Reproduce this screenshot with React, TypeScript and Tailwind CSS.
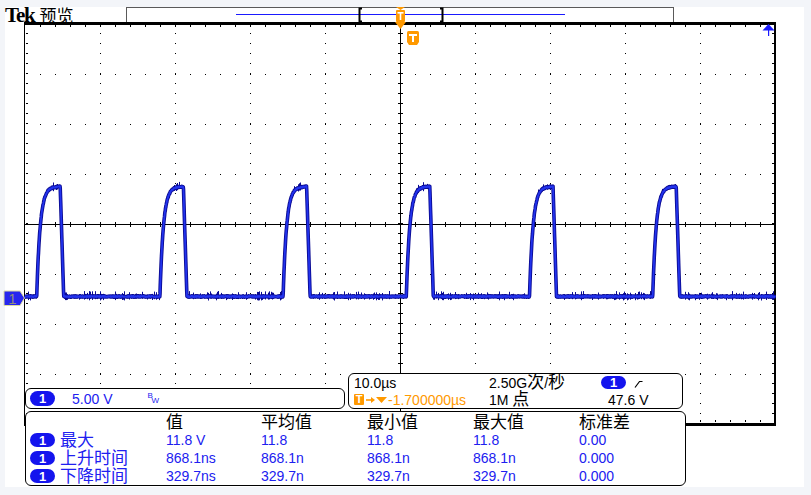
import React from "react";

const BASE = 296.5;
const TOP = 186.5;
const PERIOD = 123.2;
const FIRST = 36.7;

function rng(seed: number) {
  let a = seed;
  return () => {
    a = (a + 0x6d2b79f5) | 0;
    let t = Math.imul(a ^ (a >>> 15), 1 | a);
    t = (t + Math.imul(t ^ (t >>> 7), 61 | t)) ^ t;
    return ((t ^ (t >>> 14)) >>> 0) / 4294967296;
  };
}

function level(x: number) {
  const k = Math.floor((x - FIRST) / PERIOD);
  if (k < 0) return BASE;
  const t = x - (FIRST + k * PERIOD);
  if (t < 23.5) return BASE - (BASE - TOP) * (1 - Math.exp(-t / 3.5));
  if (t < 27) return TOP + (BASE - TOP) * ((t - 23.5) / 3.5);
  return BASE;
}

function Waveform() {
  const r = rng(7);
  const pts: string[] = [];
  for (let x = 25; x <= 775; x += 0.25) {
    const y = level(x) + (r() - 0.5) * 1.2;
    pts.push(`${x.toFixed(2)},${y.toFixed(2)}`);
  }
  let spikes = "";
  for (let x = 25; x < 775; x++) {
    const y = level(x + 0.5);
    if (r() < 0.3) {
      const up = 2 + r() * 3.5;
      const dn = 2 + r() * 2;
      spikes += `M${x + 0.5} ${(y - up).toFixed(1)}V${(y + dn).toFixed(1)}`;
    }
  }
  return (
    <g>
      <polyline points={pts.join(" ")} fill="none" stroke="#0a0a92" strokeWidth={3.6} strokeLinejoin="round" />
      <path d={spikes} stroke="#0a0a92" strokeWidth={1} />
      <polyline points={pts.join(" ")} fill="none" stroke="#2233ee" strokeWidth={1.8} strokeLinejoin="round" />
    </g>
  );
}

function Graticule() {
  let d = "";
  const dot = (x: number, y: number, w = 1, h = 1) => {
    d += `M${x} ${y}h${w}v${h}h${-w}z`;
  };
  for (let k = 1; k < 10; k++) {
    if (k === 5) continue;
    const x = 25 + 75 * k;
    for (let y = 33; y < 423; y += 10) dot(x, y);
  }
  for (let k = 1; k < 8; k++) {
    if (k === 4) continue;
    const y = 24 + 50 * k;
    for (let x = 40; x < 775; x += 15) dot(x, y);
  }
  for (let x = 40; x < 775; x += 15) {
    dot(x, 25, 1, 2);
    dot(x, 420, 1, 2);
    dot(x, 222, 1, 5);
  }
  for (let y = 33; y < 423; y += 10) {
    dot(26, y, 2, 1);
    dot(772, y, 2, 1);
    dot(398, y, 5, 1);
  }
  return (
    <svg className="block ml-[18px]" width={753} height={404} viewBox="23 22 753 404" shapeRendering="crispEdges">
      <path d={d} fill="#000" />
      <rect x={400} y={22} width={1} height={402} fill="#000" />
      <rect x={24} y={224} width={751} height={1} fill="#000" />
      <rect x={24} y={22} width={752} height={3} fill="#000" />
      <rect x={24} y={22} width={1} height={404} fill="#000" />
      <rect x={774} y={22} width={2} height={404} fill="#000" />
      <rect x={24} y={423} width={752} height={3} fill="#000" />
      <g shapeRendering="auto">
        <Waveform />
      </g>
    </svg>
  );
}

function Overlay() {
  return (
    <svg className="absolute left-0 top-0 pointer-events-none" width={811} height={495} viewBox="0 0 811 495">
      <rect x={236} y={14} width={329} height={1} fill="#1a1aff" />
      <path d="M362 8.5H359.5V21.5H362" fill="none" stroke="#000" strokeWidth={2} />
      <path d="M440 8.5H442.5V21.5H440" fill="none" stroke="#000" strokeWidth={2} />
      <path d="M396 7H405L400.5 10Z" fill="#ff9900" />
      <rect x={396} y={10} width={9} height={12} rx={1} fill="#ff9900" />
      <rect x={397.5} y={12} width={6} height={1.6} fill="#fff" />
      <rect x={399.7} y={12} width={1.6} height={8} fill="#fff" />
      <path d="M395 22H406L400.5 29Z" fill="#ff9900" />
      <path d="M407 32.5Q407 31 408.5 31H417.5Q419 31 419 32.5V42L417 45H409L407 42Z" fill="#ff9900" />
      <rect x={409} y={34} width={8} height={2} fill="#fff" />
      <rect x={412} y={34} width={2} height={8} fill="#fff" />
      <path d="M762.5 30.5H774.5L768.5 24Z" fill="#1a1aff" />
      <rect x={768} y={30} width={1.2} height={6} fill="#1a1aff" />
      <path d="M4 291H20L24.5 298L20 305.5H4Z" fill="#2626ee" stroke="#deddA0" strokeWidth={1} />
      <text x={12.5} y={303.5} textAnchor="middle" fontSize={15} fill="#8f8f7c" fontFamily="Liberation Sans, sans-serif">
        1
      </text>
    </svg>
  );
}

const Pill = ({ h = "h-[14px]" }: { h?: string }) => (
  <span
    className={`inline-flex w-[25px] ${h} rounded-full bg-[#1414ee] text-white text-[13px] font-bold leading-none items-center justify-center`}
  >
    1
  </span>
);

const header = ["值", "平均值", "最小值", "最大值", "标准差"];
const rows = [
  ["最大", "11.8 V", "11.8", "11.8", "11.8", "0.00"],
  ["上升时间", "868.1ns", "868.1n", "868.1n", "868.1n", "0.000"],
  ["下降时间", "329.7ns", "329.7n", "329.7n", "329.7n", "0.000"],
];
const colW = ["w-[95px]", "w-[106px]", "w-[106px]", "w-[106px]", "flex-1"];

export default function App() {
  return (
    <div className="relative w-[811px] h-[495px] overflow-hidden bg-[#f3f5f9] pt-[7px] pl-[5px] font-['Liberation_Sans','Noto_Sans_CJK_SC',sans-serif]">
      <div className="relative w-[799px] h-[480px] bg-white">
        <div className="flex h-[15px]">
          <div className="w-[121px] flex items-baseline whitespace-nowrap leading-[15px] text-black">
            <span className="font-['Liberation_Serif',serif] font-bold text-[21px] tracking-[-1.2px]">Tek</span>
            <span className="ml-[5px] text-[17px] font-['Noto_Sans_CJK_SC',sans-serif]">预览</span>
          </div>
          <div className="w-[548px] h-[15px] border-x border-t border-[#5a5a5a]" />
        </div>
        <Graticule />

        <div className="absolute left-[20px] top-[381px] w-[320px] h-[21px] flex items-center bg-white border border-black rounded-[6px] text-[14px] text-[#2020f0]">
          <span className="ml-[4px] flex"><Pill h="h-[15px]" /></span>
          <span className="ml-[17px] leading-none">5.00 V</span>
          <span className="ml-[35px] relative text-[8px] leading-none -mt-[5px]">
            B<span className="absolute left-[4px] top-[5px]">W</span>
          </span>
        </div>

        <div className="absolute left-[343px] top-[366px] w-[335px] h-[36px] bg-white border border-black rounded-[6px] pl-[5px] text-[14px] leading-none">
          <div className="flex items-center h-[17px]">
            <span className="w-[135px] text-black">10.0µs</span>
            <span className="w-[112px] text-black">
              2.50G<span className="text-[17px]">次</span>/<span className="text-[17px]">秒</span>
            </span>
            <Pill h="h-[13px]" />
            <svg className="ml-[8px]" width={10} height={10} viewBox="0 0 10 10">
              <path d="M1 9.5L5.5 3.5H8.5" fill="none" stroke="#000" strokeWidth={1.2} />
            </svg>
          </div>
          <div className="flex items-center h-[17px]">
            <span className="w-[135px] flex items-center text-[#ff9900]">
              <span className="inline-flex w-[10px] h-[11px] bg-[#ff9900] rounded-[1px] text-white text-[11px] font-bold items-center justify-center">T</span>
              <svg className="ml-[2px]" width={22} height={10} viewBox="0 0 22 10">
                <path d="M0 5H7" stroke="#ff9900" strokeWidth={1.6} />
                <path d="M5 2L9 5L5 8Z" fill="#ff9900" />
                <path d="M10 2H21L15.5 8Z" fill="#ff9900" />
              </svg>
              <span>-1.700000µs</span>
            </span>
            <span className="w-[112px] text-black">
              1M <span className="text-[17px]">点</span>
            </span>
            <span className="ml-[7px] text-black">47.6 V</span>
          </div>
        </div>

        <div className="absolute left-[20px] top-[404px] w-[661px] h-[75px] bg-white border border-black rounded-[6px] pt-[1px] leading-none">
          <div className="flex items-center h-[18px] text-[17px] text-black">
            <span className="w-[140px]" />
            {header.map((h, i) => (
              <span key={h} className={colW[i]}>{h}</span>
            ))}
          </div>
          {rows.map((row) => (
            <div key={row[0]} className="flex items-center h-[18px] text-[14px] text-[#2020f0]">
              <span className="w-[140px] pl-[4px] flex items-center">
                <Pill />
                <span className="ml-[5px] text-[17px]">{row[0]}</span>
              </span>
              {row.slice(1).map((v, i) => (
                <span key={i} className={colW[i]}>{v}</span>
              ))}
            </div>
          ))}
        </div>
      </div>
      <Overlay />
    </div>
  );
}
